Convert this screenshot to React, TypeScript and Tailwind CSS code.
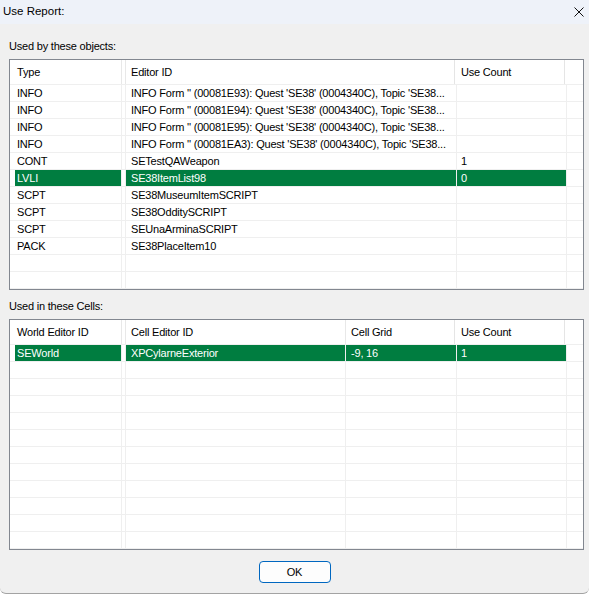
import React from 'react';

type Col = {
  title: string;
  width: string;
  pad: string;
  // header divider drawn 2px inside the column edge instead of on it
  inset?: boolean;
  spacer?: boolean;
  first?: boolean;
};

type Row = { cells: string[]; selected?: boolean };

const objectCols: Col[] = [
  { title: 'Type', width: 'w-[112px]', pad: 'ml-[5px] pl-[2px]', first: true },
  { title: '', width: 'w-[4px]', pad: '', spacer: true },
  { title: 'Editor ID', width: 'w-[331px]', pad: 'pl-[5px]', inset: true },
  { title: 'Use Count', width: 'w-[110px]', pad: 'pl-[4px]', inset: true },
];

const cellCols: Col[] = [
  { title: 'World Editor ID', width: 'w-[112px]', pad: 'ml-[5px] pl-[2px]', first: true },
  { title: '', width: 'w-[4px]', pad: '', spacer: true },
  { title: 'Cell Editor ID', width: 'w-[220px]', pad: 'pl-[5px]' },
  { title: 'Cell Grid', width: 'w-[111px]', pad: 'pl-[5px]', inset: true },
  { title: 'Use Count', width: 'w-[110px]', pad: 'pl-[4px]', inset: true },
];

const objects: Row[] = [
  { cells: ['INFO', '', "INFO Form '' (00081E93): Quest 'SE38' (0004340C), Topic 'SE38...", ''] },
  { cells: ['INFO', '', "INFO Form '' (00081E94): Quest 'SE38' (0004340C), Topic 'SE38...", ''] },
  { cells: ['INFO', '', "INFO Form '' (00081E95): Quest 'SE38' (0004340C), Topic 'SE38...", ''] },
  { cells: ['INFO', '', "INFO Form '' (00081EA3): Quest 'SE38' (0004340C), Topic 'SE38...", ''] },
  { cells: ['CONT', '', 'SETestQAWeapon', '1'] },
  { cells: ['LVLI', '', 'SE38ItemList98', '0'], selected: true },
  { cells: ['SCPT', '', 'SE38MuseumItemSCRIPT', ''] },
  { cells: ['SCPT', '', 'SE38OdditySCRIPT', ''] },
  { cells: ['SCPT', '', 'SEUnaArminaSCRIPT', ''] },
  { cells: ['PACK', '', 'SE38PlaceItem10', ''] },
];

const cells: Row[] = [
  { cells: ['SEWorld', '', 'XPCylarneExterior', '-9, 16', '1'], selected: true },
];

const TOTAL_ROWS = 12;

function HeaderRow({ cols }: { cols: Col[] }) {
  return (
    <div className="flex h-[25px] border-b border-[#efefef]">
      {cols.map((c, i) =>
        c.inset ? (
          <div key={i} className={`${c.width} shrink-0 flex`}>
            <div className={`flex-1 flex items-center ${c.pad}`}>{c.title}</div>
            <span className="w-px bg-[#e5e5e5]" />
            <span className="w-[2px]" />
          </div>
        ) : (
          <div
            key={i}
            className={`${c.width} shrink-0 flex items-center border-r border-[#e8e8e8]`}
          >
            <div className={c.pad}>{c.title}</div>
          </div>
        )
      )}
      <div className="flex-1" />
    </div>
  );
}

function DataRow({ cols, row }: { cols: Col[]; row?: Row }) {
  return (
    <div className="flex h-[17px] border-b border-[#efefef]">
      {cols.map((c, i) => (
        <div key={i} className={`${c.width} shrink-0 border-r border-[#efefef]`}>
          {!c.spacer && (
            <div
              className={`h-full leading-[16px] whitespace-nowrap overflow-hidden ${c.pad} ${
                row?.selected ? 'bg-[#007d40] text-white' : ''
              }`}
            >
              {row?.cells[i] ?? ''}
            </div>
          )}
        </div>
      ))}
      <div className="flex-1" />
    </div>
  );
}

function ListView({ cols, rows }: { cols: Col[]; rows: Row[] }) {
  const filler = Array.from({ length: TOTAL_ROWS - rows.length });
  return (
    <div className="w-[575px] border border-[#828790] bg-white">
      <HeaderRow cols={cols} />
      {rows.map((r, i) => (
        <DataRow key={i} cols={cols} row={r} />
      ))}
      {filler.map((_, i) => (
        <DataRow key={`f${i}`} cols={cols} />
      ))}
    </div>
  );
}

export default function App() {
  return (
    <div className="w-[589px] h-[596px] bg-white text-black text-[11px] tracking-[-0.2px] font-['Liberation_Sans',Arial,sans-serif] overflow-hidden">
      {/* title bar */}
      <div className="h-[24px] bg-[#eef2f9] flex items-center justify-between pl-[3px] pr-[5px]">
        <span className="text-[11.5px] tracking-normal">Use Report:</span>
        <svg width="10" height="10" viewBox="0 0 10 10">
          <path d="M0.5 0.5 L9.5 9.5 M9.5 0.5 L0.5 9.5" stroke="#111" strokeWidth="1" fill="none" />
        </svg>
      </div>

      <div className="h-[570px] bg-[#f0f0f0] border-b border-[#a3a3a3] rounded-b-[6px] pt-[14px]">
        <div className="pl-[9px]">
          <div className="h-[17px] leading-[17px] mb-[4px]">Used by these objects:</div>
          <ListView cols={objectCols} rows={objects} />

          <div className="h-[17px] leading-[17px] mt-[8px] mb-[4px]">Used in these Cells:</div>
          <ListView cols={cellCols} rows={cells} />
        </div>

        <div className="mt-[11px] flex justify-center">
          <button className="w-[72px] h-[22px] border border-[#0067c0] rounded-[4px] bg-[#fdfdfd] text-[11px] leading-none">
            OK
          </button>
        </div>
      </div>
    </div>
  );
}
